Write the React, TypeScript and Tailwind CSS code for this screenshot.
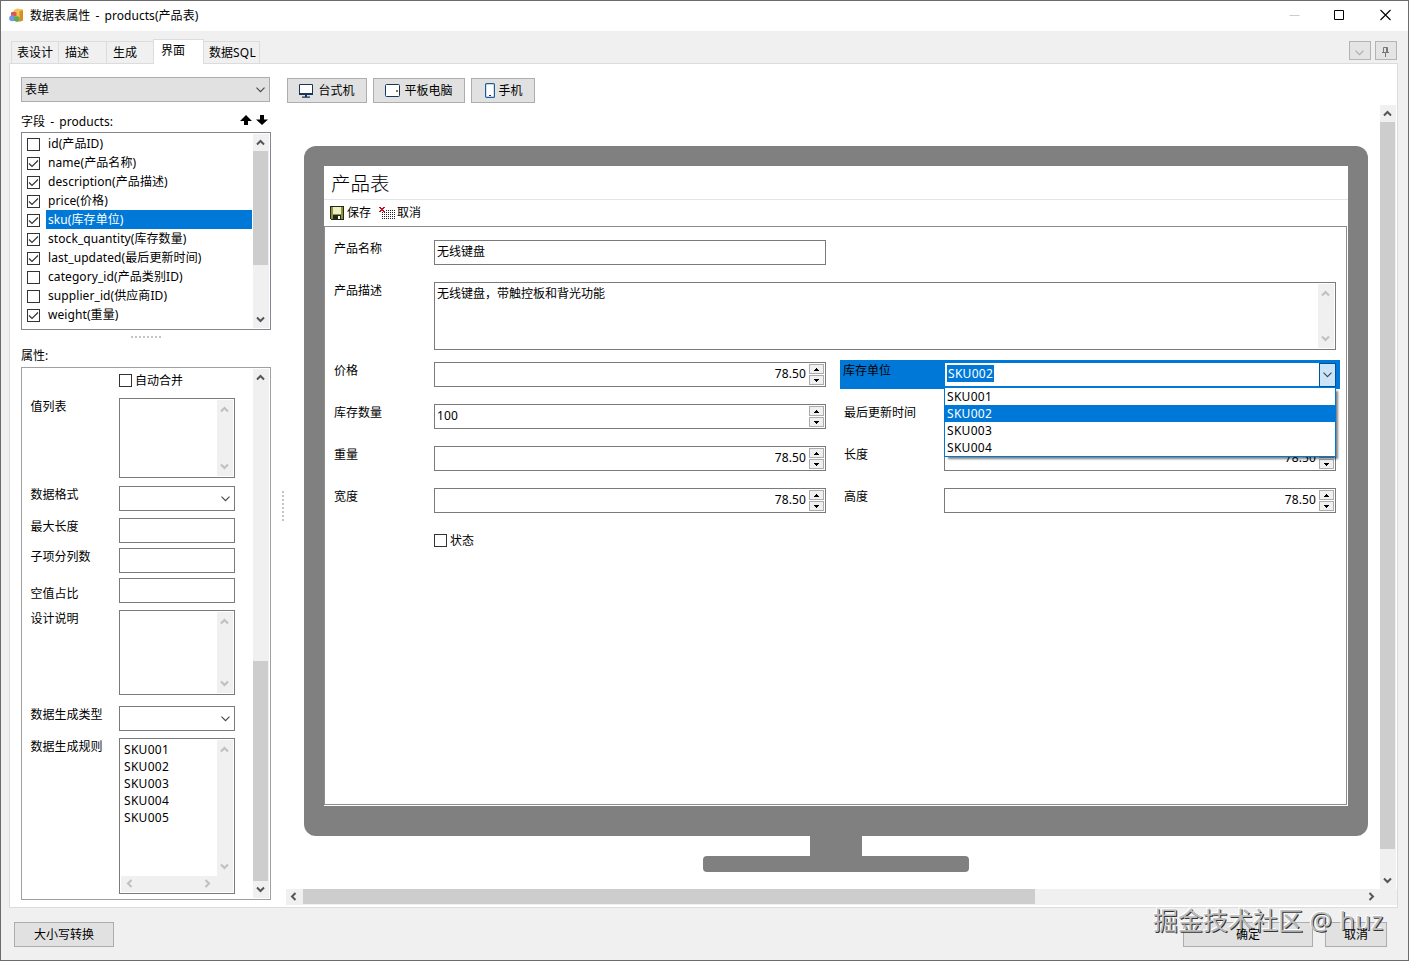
import React from 'react';
import clsx from 'clsx';

interface Field {
  name: string;
  checked: boolean;
  selected?: boolean;
}

const fields: Field[] = [
  { name: 'id(产品ID)', checked: false },
  { name: 'name(产品名称)', checked: true },
  { name: 'description(产品描述)', checked: true },
  { name: 'price(价格)', checked: true },
  { name: 'sku(库存单位)', checked: true, selected: true },
  { name: 'stock_quantity(库存数量)', checked: true },
  { name: 'last_updated(最后更新时间)', checked: true },
  { name: 'category_id(产品类别ID)', checked: false },
  { name: 'supplier_id(供应商ID)', checked: false },
  { name: 'weight(重量)', checked: true },
];

const rules = ['SKU001', 'SKU002', 'SKU003', 'SKU004', 'SKU005'];
const skuOptions = ['SKU001', 'SKU002', 'SKU003', 'SKU004'];

const arrowPaths = {
  up: 'M1 6.5L4.5 3L8 6.5',
  down: 'M1 2.5L4.5 6L8 2.5',
  left: 'M6.5 1L3 4.5L6.5 8',
  right: 'M2.5 1L6 4.5L2.5 8',
};

const Arrow = ({ dir, disabled }: { dir: keyof typeof arrowPaths; disabled?: boolean }) => (
  <svg width="9" height="9" viewBox="0 0 9 9" fill="none" stroke={disabled ? '#bfbfbf' : '#555'} strokeWidth="2">
    <path d={arrowPaths[dir]} />
  </svg>
);

const Chevron = ({ color = '#444' }: { color?: string }) => (
  <svg width="9" height="6" viewBox="0 0 9 6" fill="none" stroke={color} strokeWidth="1.1">
    <path d="M0.5 0.7L4.5 4.7L8.5 0.7" />
  </svg>
);

const Checkbox = ({ checked }: { checked?: boolean }) => (
  <span className="flex h-[13px] w-[13px] shrink-0 items-center justify-center border border-[#333] bg-white">
    {checked && (
      <svg width="11" height="11" viewBox="0 0 11 11" fill="none" stroke="#333" strokeWidth="1.2">
        <path d="M1 5.5L4 8.500L10 2.500" />
      </svg>
    )}
  </span>
);

const DisabledScroll = () => (
  <div className="flex w-4 shrink-0 flex-col items-center justify-between bg-[#f0f0f0] py-[5px] pr-px">
    <Arrow dir="up" disabled />
    <Arrow dir="down" disabled />
  </div>
);

const TextArea = ({ className, children }: { className?: string; children?: React.ReactNode }) => (
  <div className={clsx('flex border border-[#7a7a7a] bg-white p-px', className)}>
    <div className="flex-1">{children}</div>
    <DisabledScroll />
  </div>
);

const Input = ({ children, className }: { children?: React.ReactNode; className?: string }) => (
  <div className={clsx('flex h-[25px] items-center border border-[#7a7a7a] bg-white', className)}>{children}</div>
);

const Combo = () => (
  <Input className="w-[116px] justify-end pr-1">
    <Chevron />
  </Input>
);

const SpinButton = ({ up }: { up?: boolean }) => (
  <span className="flex h-[10px] w-[15px] items-center justify-center border border-[#acacac] bg-[#f0f0f0]">
    <svg width="5" height="3" viewBox="0 0 5 3" shapeRendering="crispEdges">
      <path d={up ? 'M2 0h1v1h1v1h1v1H0V2h1V1h1z' : 'M0 0h5v1H4v1H3v1H2V2H1V1H0z'} />
    </svg>
  </span>
);

const NumberInput = ({ value, left }: { value: string; left?: boolean }) => (
  <Input className="w-[392px] justify-between pr-px pl-[2px]">
    <span className={clsx('flex-1 pr-[3px] pb-[2px] tracking-[0.1px]', left ? 'text-left' : 'text-right')}>{value}</span>
    <span className="flex flex-col gap-px">
      <SpinButton up />
      <SpinButton />
    </span>
  </Input>
);

const Label = ({ children, className }: { children: React.ReactNode; className?: string }) => (
  <span className={clsx('shrink-0 self-start', className)}>{children}</span>
);

const PropRow = ({ label, className, labelClass = 'pt-px', children }: {
  label: string;
  className: string;
  labelClass?: string;
  children: React.ReactNode;
}) => (
  <div className={clsx('flex', className)}>
    <Label className={clsx('w-[89px] pl-[0.5px]', labelClass)}>{label}</Label>
    {children}
  </div>
);

const Button = ({ children, className }: { children?: React.ReactNode; className?: string }) => (
  <div className={clsx('flex h-[25px] items-center justify-center border border-[#adadad] bg-[#e1e1e1]', className)}>
    {children}
  </div>
);

const TitleBar = () => (
  <div className="flex h-[30px] shrink-0 items-center bg-white pl-2">
    <svg width="15" height="15" viewBox="0 0 15 15" className="-mt-px">
      <path d="M5 2L8 0.5L14 1.5V12.500L9.5 14L5 12z" fill="#f3c25a" />
      <path d="M10.500 3.500L14 2V12.500L10.500 13.7z" fill="#d98f1c" />
      <path d="M2 4.500L4.500 3.500L7.500 4.500V8L4.500 9.2L2 8z" fill="#e0564c" />
      <circle cx="3.2" cy="10.3" r="3" fill="#6f9be0" />
      <path d="M5 9.5L8 8L10.5 9.5V12.5L8 14L5 12.7z" fill="#59ad55" />
    </svg>
    <span className="ml-[6px] flex-1 tracking-[0.05px] [word-spacing:2px]">数据表属性 - products(产品表)</span>
    <svg width="104" height="12" viewBox="0 0 104 12" fill="none" className="mr-[15px] -mt-[2px]">
      <path d="M0.5 6.500h10" stroke="#ccc" />
      <path d="M45.5 1.5h9v9h-9z" stroke="#000" />
      <path d="M91.500 1l10 10M101.500 1l-10 10" stroke="#000" strokeWidth="1.1" />
    </svg>
  </div>
);

const Tabs = () => (
  <div className="flex h-[32px] shrink-0 items-end pl-[10px]">
    <div className="flex h-[22px] w-[48px] items-center border border-b-0 border-[#dcdcdc] pl-[5px]">表设计</div>
    <div className="flex h-[22px] w-[48px] items-center border-t border-r border-[#dcdcdc] pl-[6px]">描述</div>
    <div className="flex h-[22px] w-[46px] items-center border-t border-[#dcdcdc] pl-[6px]">生成</div>
    <div className="z-10 -mb-px flex h-[25px] w-[51px] items-center border border-b-0 border-[#dcdcdc] bg-white pb-[3px] pl-[7px]">
      界面
    </div>
    <div className="flex h-[22px] w-[56px] items-center border-t border-r border-[#dcdcdc] pl-[5px]">
      数据<span className="tracking-[0.2px]">SQL</span>
    </div>
    <div className="flex flex-1 justify-end gap-1 pr-[11px] pb-[3px]">
      <div className="flex h-[19px] w-[22px] items-center justify-center border border-[#b4b4b4] bg-[#e4e4e4] pt-1 pr-px">
        <Chevron color="#aaa" />
      </div>
      <div className="flex h-[19px] w-[22px] items-center justify-center border border-[#b4b4b4] bg-[#e4e4e4] pt-[3px]">
        <svg width="7" height="10" viewBox="0 0 7 10" fill="none" stroke="#777" className="mr-px">
          <path d="M1.5 5V0.5h4V5M0 5.5h7M3.5 6v4" />
          <path d="M4.5 1v4" />
        </svg>
      </div>
    </div>
  </div>
);

const FieldList = () => (
  <div className="flex h-[198px] border border-[#828790] bg-white p-px">
    <div className="flex-1 pl-1">
      {fields.map((f) => (
        <div key={f.name} className="flex h-[19px] items-center">
          <span className="mt-px mr-[6px]">
            <Checkbox checked={f.checked} />
          </span>
          <span className={clsx('flex h-[19px] w-[206px] items-center pl-[2px] tracking-[0.08px]', f.selected && 'bg-[#0078d7] text-white')}>
            {f.name}
          </span>
        </div>
      ))}
    </div>
    <div className="flex w-4 flex-col items-center bg-[#f0f0f0] pr-px">
      <div className="flex h-[17px] items-center">
        <Arrow dir="up" />
      </div>
      <div className="h-[114px] w-[15px] self-start bg-[#cdcdcd]" />
      <div className="mt-auto flex h-[17px] items-center">
        <Arrow dir="down" />
      </div>
    </div>
  </div>
);

const Properties = () => (
  <div className="flex h-[533px] border border-[#a0a0a0] bg-white p-px">
    <div className="flex-1 pl-[7px]">
      <div className="mt-[3px] flex h-[16px] items-center pt-px pl-[89px]">
        <Checkbox />
        <span className="ml-[3px]">自动合并</span>
      </div>
      <PropRow label="值列表" className="mt-[10px]">
        <TextArea className="h-[80px] w-[116px]" />
      </PropRow>
      <PropRow label="数据格式" className="mt-2">
        <Combo />
      </PropRow>
      <PropRow label="最大长度" className="mt-[7px]">
        <Input className="w-[116px]" />
      </PropRow>
      <PropRow label="子项分列数" className="mt-[5px]">
        <Input className="w-[116px]" />
      </PropRow>
      <PropRow label="空值占比" className="mt-[5px]" labelClass="pt-2">
        <Input className="w-[116px]" />
      </PropRow>
      <PropRow label="设计说明" className="mt-[7px]">
        <TextArea className="h-[85px] w-[116px]" />
      </PropRow>
      <PropRow label="数据生成类型" className="mt-[11px]">
        <Combo />
      </PropRow>
      <PropRow label="数据生成规则" className="mt-[7px]">
        <div className="h-[156px] w-[116px] border border-[#7a7a7a] p-px">
          <div className="flex h-[136px]">
            <div className="flex-1 pt-[1px] pl-[3px]">
              {rules.map((r) => (
                <div key={r} className="h-[17px] leading-[17px] tracking-[0.3px]">{r}</div>
              ))}
            </div>
            <DisabledScroll />
          </div>
          <div className="flex h-[16px] items-center justify-between bg-[#f0f0f0] pr-[21px] pb-px pl-1">
            <Arrow dir="left" disabled />
            <Arrow dir="right" disabled />
          </div>
        </div>
      </PropRow>
    </div>
    <div className="flex w-4 flex-col items-center bg-[#f0f0f0] pr-px">
      <div className="flex h-[17px] items-center">
        <Arrow dir="up" />
      </div>
      <div className="mt-auto h-[220px] w-[15px] self-start bg-[#cdcdcd]" />
      <div className="flex h-[17px] items-center">
        <Arrow dir="down" />
      </div>
    </div>
  </div>
);

const Sidebar = () => (
  <div className="w-[250px] shrink-0 pt-[13px]">
    <Button className="w-[249px] !justify-between pr-1 pl-[3px]">
      表单 <Chevron />
    </Button>
    <div className="flex h-[30px] justify-between pt-[12px] pr-[2px]">
      <span className="tracking-[0.05px] [word-spacing:2px]">字段 - products:</span>
      <svg width="28" height="10" viewBox="0 0 28 10" className="mt-px mr-px">
        <path d="M6 0L12 6H8V10H4V6H0z" />
        <path d="M22 10L28 4.500H24V0H20V4.500H16z" />
      </svg>
    </div>
    <FieldList />
    <div className="mx-auto mt-[6px] w-[30px] border-b-2 border-dotted border-[#c4c4c4]" />
    <div className="h-[29px] pt-[10px]">属性:</div>
    <Properties />
  </div>
);

const DeviceButtons = () => (
  <div className="flex h-[41px] gap-[6px] pt-[14px] pl-px">
    <Button className="w-[80px] gap-[5px]">
      <svg width="14" height="14" viewBox="0 0 14 14">
        <path d="M0.500 0.500h13v9H0.500z" fill="#fff" stroke="#16365c" />
        <path d="M0 9h14v2H0zM6 11h2v2H6zM3 12.500h8v1.300H3z" fill="#16365c" />
      </svg>
      台式机
    </Button>
    <Button className="w-[92px] gap-[4px]">
      <svg width="15" height="13" viewBox="0 0 15 13">
        <rect x="0.5" y="0.5" width="14" height="12" rx="1" fill="#fff" stroke="#16365c" />
        <path d="M11 6h2v2h-2z" fill="#a0703c" />
      </svg>
      平板电脑
    </Button>
    <Button className="w-[64px] gap-[3px] pl-[2px]">
      <svg width="10" height="15" viewBox="0 0 10 15">
        <rect x="0.6" y="0.6" width="8.800" height="13.800" rx="1" fill="#fff" stroke="#1d5c9c" strokeWidth="1.2" />
        <path d="M4 12h2v1H4z" fill="#16365c" />
      </svg>
      手机
    </Button>
  </div>
);

const Toolbar = () => (
  <div className="flex h-[26px] items-center pl-[6px]">
    <svg width="14" height="14" viewBox="0 0 14 14" shapeRendering="crispEdges">
      <path d="M0 0h14v14H1V13H0z" fill="#22281c" />
      <path d="M1 1h12v12H1z" fill="#8c9440" />
      <path d="M3 1h8v7H3z" fill="#eef0c4" />
      <path d="M3 9h8v5H3z" fill="#22281c" />
      <path d="M8 10h2v3H8z" fill="#fff" />
    </svg>
    <span className="ml-[3px]">保存</span>
    <svg width="17" height="14" viewBox="0 0 17 14" className="ml-2" shapeRendering="crispEdges">
      <path d="M0 1h2v1h2V1h2v1H5v1H4v1h1v1h1v1H4V5H2v1H0V5h1V4h1V3H1V2H0z" fill="#c4101c" />
      <path d="M7 4.500h10M3 6.500h14M3 8.500h14M3 10.500h14M3 12.500h14" stroke="#222" strokeDasharray="1 1" />
    </svg>
    <span className="ml-px">取消</span>
  </div>
);

const SkuCombo = () => (
  <div className="relative -mt-[2px] flex h-[29px] w-[500px] bg-[#0078d7] pt-[3px]">
    <Label className="w-[105px] pl-[3px]">库存单位</Label>
    <div className="flex h-[23px] w-[391px] items-center bg-white pl-[2px]">
      <span className="-mt-[2px] bg-[#0078d7] pr-px pl-px leading-[17px] tracking-[0.3px] text-white">SKU002</span>
      <span className="ml-auto flex h-[24px] w-[17px] items-center justify-center border border-[#005499] bg-[#cce4f7]">
        <Chevron />
      </span>
    </div>
    <div className="absolute top-[27px] left-[104px] z-10 w-[392px] border border-[#0078d7] bg-white shadow-[3px_3px_2px_-1px_rgba(0,0,0,0.5)]">
      {skuOptions.map((o) => (
        <div key={o} className={clsx('h-[17px] pl-[2px] leading-[17px] tracking-[0.3px]', o === 'SKU002' && 'bg-[#0078d7] text-white')}>
          {o}
        </div>
      ))}
    </div>
  </div>
);

const FormRow = ({ label, children, right, rightLabel }: {
  label: string;
  children: React.ReactNode;
  right?: React.ReactNode;
  rightLabel?: string;
}) => (
  <div className="flex h-[42px] items-start">
    <Label className="w-[100px] pt-px">{label}</Label>
    {children}
    {rightLabel && <Label className="ml-[14px] w-[104px] pt-px pl-1">{rightLabel}</Label>}
    {right}
  </div>
);

const ProductForm = () => (
  <div className="h-[579px] w-[1023px] border border-[#8c8c8c] pt-[13px] pl-[9px]">
    <FormRow label="产品名称">
      <Input className="w-[392px] pb-[2px] pl-[2px]">无线键盘</Input>
    </FormRow>
    <div className="flex h-[80px]">
      <Label className="w-[100px] pt-px">产品描述</Label>
      <TextArea className="h-[68px] w-[902px]">
        <div className="pt-[2px] pl-px">无线键盘，带触控板和背光功能</div>
      </TextArea>
    </div>
    <FormRow label="价格" right={<div className="ml-[14px]"><SkuCombo /></div>}>
      <NumberInput value="78.50" />
    </FormRow>
    <FormRow label="库存数量" rightLabel="最后更新时间" right={<NumberInput value="" />}>
      <NumberInput value="100" left />
    </FormRow>
    <FormRow label="重量" rightLabel="长度" right={<NumberInput value="78.50" />}>
      <NumberInput value="78.50" />
    </FormRow>
    <FormRow label="宽度" rightLabel="高度" right={<NumberInput value="78.50" />}>
      <NumberInput value="78.50" />
    </FormRow>
    <div className="mt-[2px] flex items-center pl-[100px]">
      <Checkbox />
      <span className="ml-[3px] pt-px">状态</span>
    </div>
  </div>
);

const Monitor = () => (
  <div className="flex w-[1064px] flex-col items-center">
    <div className="h-[690px] w-full rounded-[12px] bg-[#808080] p-5">
      <div className="h-[640px] bg-white">
        <div className="flex h-[34px] items-center border-b border-[#e4e4e4] pt-[2px] pl-[7px] text-[19.5px] font-light">产品表</div>
        <Toolbar />
        <ProductForm />
      </div>
    </div>
    <div className="h-[20px] w-[52px] bg-[#808080]" />
    <div className="h-[16px] w-[266px] rounded-[4px] bg-[#808080]" />
  </div>
);

const Preview = () => (
  <div className="flex-1">
    <DeviceButtons />
    <div className="flex h-[784px]">
      <div className="w-[1094px] pt-[41px] pl-[18px]">
        <Monitor />
      </div>
      <div className="flex w-4 flex-col items-center bg-[#f0f0f0] pr-px">
        <div className="flex h-[17px] items-center">
          <Arrow dir="up" />
        </div>
        <div className="h-[727px] w-[15px] self-start bg-[#cdcdcd]" />
        <div className="mt-auto flex h-[18px] items-center">
          <Arrow dir="down" />
        </div>
      </div>
    </div>
    <div className="flex h-[16px] items-center bg-[#f0f0f0] pr-[21px] pb-px pl-[3px]">
      <Arrow dir="left" />
      <div className="ml-[5px] h-[15px] w-[732px] self-start bg-[#cdcdcd]" />
      <div className="ml-auto">
        <Arrow dir="right" />
      </div>
    </div>
  </div>
);

export default function App() {
  return (
    <div className="relative flex h-[961px] w-[1409px] flex-col overflow-hidden border border-[#6c6c6c] bg-[#f0f0f0] font-['Noto_Sans','Noto_Sans_CJK_SC',sans-serif] text-[12px] leading-[16px] whitespace-nowrap text-black">
      <TitleBar />
      <Tabs />
      <div className="ml-2 flex h-[845px] w-[1389px] shrink-0 border border-[#dcdcdc] bg-white pl-[11px]">
        <Sidebar />
        <div className="flex w-[15px] shrink-0 justify-center pt-[427px] pl-[8px]">
          <div className="h-[30px] border-l-2 border-dotted border-[#c4c4c4]" />
        </div>
        <Preview />
      </div>
      <div className="flex pt-[14px] pr-[21px] pl-[13px]">
        <Button className="w-[100px]">大小写转换</Button>
        <Button className="ml-auto w-[130px]">
          <span className="relative z-10">确定</span>
        </Button>
        <Button className="ml-3 w-[62px]">
          <span className="relative z-10">取消</span>
        </Button>
      </div>
      <div className="absolute top-[902px] left-[1152px] text-[25px] leading-[34px] text-[#bdbdbd] [text-shadow:1px_1px_0_#333,-1px_-1px_0_#fff]">
        掘金技术社区 <span className="tracking-[0.5px]">@ huz</span>
      </div>
    </div>
  );
}
